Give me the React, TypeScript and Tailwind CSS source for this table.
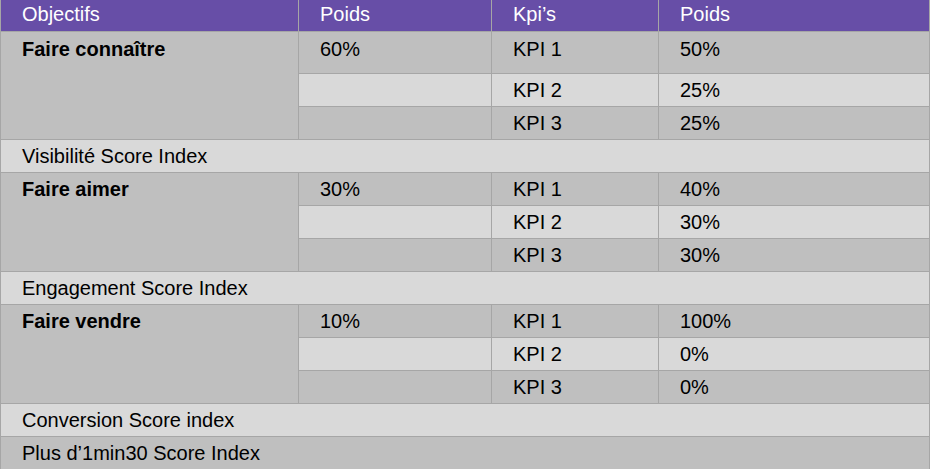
import React from 'react';

// --- DONNÉES ---
interface Kpi {
    nom: string;
    poids: string;
}

interface Objectif {
    titre: string;
    poids: string;
    kpis: Kpi[];
    score: string;
    premiere: string; // décalage de la première ligne
}

const objectifs: Objectif[] = [
    {
        titre: 'Faire connaître',
        poids: '60%',
        kpis: [
            { nom: 'KPI 1', poids: '50%' },
            { nom: 'KPI 2', poids: '25%' },
            { nom: 'KPI 3', poids: '25%' },
        ],
        score: 'Visibilité Score Index',
        premiere: 'pt-[6px]',
    },
    {
        titre: 'Faire aimer',
        poids: '30%',
        kpis: [
            { nom: 'KPI 1', poids: '40%' },
            { nom: 'KPI 2', poids: '30%' },
            { nom: 'KPI 3', poids: '30%' },
        ],
        score: 'Engagement Score Index',
        premiere: 'pt-[5px]',
    },
    {
        titre: 'Faire vendre',
        poids: '10%',
        kpis: [
            { nom: 'KPI 1', poids: '100%' },
            { nom: 'KPI 2', poids: '0%' },
            { nom: 'KPI 3', poids: '0%' },
        ],
        score: 'Conversion Score index',
        premiere: 'pt-[5px]',
    },
];

const dark = 'bg-[#bfbfbf]';
const light = 'bg-[#d9d9d9]';

export default function App() {
    return (
        <div
            className="w-[930px] h-[469px] overflow-hidden bg-[#a6a6a6] text-black text-[20px] leading-[23px]"
            style={{ fontFamily: '"Liberation Sans", Arial, sans-serif' }}
        >
            <div className="grid grid-cols-[297px_192px_166px_270px] grid-rows-[31px_41px_repeat(12,32px)] gap-px pl-px">
                {/* EN-TÊTE */}
                {['Objectifs', 'Poids', "Kpi’s", 'Poids'].map((h, i) => (
                    <div key={i} className="bg-[#674ea7] text-white pl-[21px] pt-[3px]">
                        {h}
                    </div>
                ))}

                {objectifs.map((obj, idx) => (
                    <React.Fragment key={idx}>
                        <div className={`${dark} row-span-3 pl-[21px] font-bold ${obj.premiere}`}>{obj.titre}</div>
                        {obj.kpis.map((kpi, k) => {
                            const bg = k === 1 ? light : dark;
                            const pt = k === 0 ? obj.premiere : 'pt-[5px]';
                            return (
                                <React.Fragment key={k}>
                                    <div className={`${bg} pl-[21px] ${pt}`}>{k === 0 ? obj.poids : ''}</div>
                                    <div className={`${bg} pl-[21px] ${pt}`}>{kpi.nom}</div>
                                    <div className={`${bg} pl-[21px] ${pt}`}>{kpi.poids}</div>
                                </React.Fragment>
                            );
                        })}
                        <div className={`${light} col-span-4 pl-[21px] pt-[5px]`}>{obj.score}</div>
                    </React.Fragment>
                ))}

                <div className={`${dark} col-span-4 pl-[21px] pt-[5px]`}>Plus d’1min30 Score Index</div>
            </div>
        </div>
    );
}
